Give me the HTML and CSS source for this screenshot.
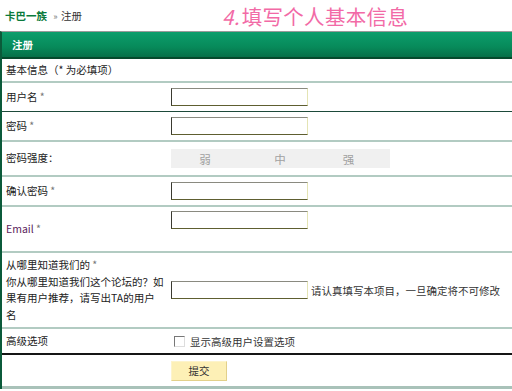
FILE: index.html
```html
<!DOCTYPE html>
<html lang="zh-CN">
<head>
    <meta charset="UTF-8">
    <meta name="viewport" content="width=device-width, initial-scale=1.0">
    <title>注册 - 卡巴一族</title>
    <link rel="stylesheet" href="styles.css">
</head>
<body>

    <div class="top">
        <div class="crumb">
            <a class="site" href="#">卡巴一族</a>
            <span class="sep">&raquo;</span>
            <span>注册</span>
        </div>
        <div class="step"><span class="num">4.</span>填写个人基本信息</div>
    </div>

    <div class="panel">
        <div class="panel-head">注册</div>

        <div class="row row-info light">
            <div class="label">基本信息（* 为必填项）</div>
        </div>

        <div class="row row-field dark-thin">
            <div class="label">用户名 <span class="req">*</span></div>
            <div class="field"><input type="text" class="text-input"></div>
        </div>

        <div class="row row-field light">
            <div class="label">密码 <span class="req">*</span></div>
            <div class="field"><input type="password" class="text-input"></div>
        </div>

        <div class="row row-strength light">
            <div class="label">密码强度：</div>
            <div class="field">
                <div class="strength">
                    <span>弱</span>
                    <span>中</span>
                    <span>强</span>
                </div>
            </div>
        </div>

        <div class="row row-field light">
            <div class="label">确认密码 <span class="req">*</span></div>
            <div class="field"><input type="password" class="text-input"></div>
        </div>

        <div class="row row-email light">
            <div class="label"><span class="email">Email</span> <span class="req">*</span></div>
            <div class="field field-top"><input type="text" class="text-input"></div>
        </div>

        <div class="row row-referrer light">
            <div class="label label-long">从哪里知道我们的 <span class="req">*</span><br>你从哪里知道我们这个论坛的？如果有用户推荐，请写出TA的用户名</div>
            <div class="field">
                <input type="text" class="text-input">
                <span class="hint">请认真填写本项目，一旦确定将不可修改</span>
            </div>
        </div>

        <div class="row row-advanced dark-thick">
            <div class="label">高级选项</div>
            <div class="field">
                <label class="check"><span class="box"></span>显示高级用户设置选项</label>
            </div>
        </div>

        <div class="row row-submit bottom">
            <div class="label"></div>
            <div class="field"><button class="submit-btn">提交</button></div>
        </div>
    </div>

</body>
</html>
```

FILE: styles.css
```css
* {
    box-sizing: border-box;
}

body {
    margin: 0;
    padding: 0;
    overflow: hidden;
    background-color: #fff;
    color: #222;
    font-family: "Noto Sans CJK SC", "DejaVu Sans", sans-serif;
    font-size: 10.5px;
}

.top {
    display: flex;
    align-items: center;
    height: 31px;
    padding-left: 5px;
}

.crumb {
    width: 217px;
    color: #333;
}

.site {
    color: #0a7a3c;
    font-weight: bold;
    text-decoration: none;
}

.sep {
    color: #777;
    font-size: 9px;
    margin: 0 1px 0 4px;
}

.step {
    color: #f26aa6;
    font-size: 20.5px;
    line-height: 24px;
    letter-spacing: 0.3px;
}

.step .num {
    font-style: italic;
    margin-right: 2px;
}

.panel {
    border-top: 1px solid #9a9a9a;
    border-left: 2px solid #0b5a3a;
}

.panel-head {
    height: 27px;
    padding-left: 10px;
    line-height: 25px;
    color: #fff;
    font-weight: bold;
    background: linear-gradient(#0c9e6c, #078a5a 60%, #067048);
    border-bottom: 2px solid #054a2c;
}

.row {
    display: flex;
    align-items: center;
}

.row.light {
    border-bottom: 2px solid #b2cbc2;
}

.row.dark-thin {
    border-bottom: 1px solid #1d4a3a;
}

.row.dark-thick {
    border-bottom: 2px solid #151515;
}

.row.bottom {
    border-bottom: 3px solid #a9c2b9;
}

.label {
    width: 169px;
    flex-shrink: 0;
    padding-left: 4px;
    line-height: 16.5px;
}

.label-long {
    padding-right: 6px;
}

.req {
    color: #777;
}

.email {
    color: #5c235c;
}

.field {
    display: flex;
    align-items: center;
}

.field-top {
    align-self: flex-start;
    padding-top: 4px;
}

.row-info {
    height: 24px;
}

.row-field {
    height: 29px;
}

.row-field.light {
    height: 30px;
}

.row-strength {
    height: 35px;
}

.row-email {
    height: 46px;
}

.row-referrer {
    height: 76px;
}

.row-advanced {
    height: 26px;
}

.row-submit {
    height: 34px;
}

.text-input {
    width: 137px;
    height: 18px;
    margin: 0;
    padding: 0 2px;
    border: 1px solid;
    border-color: #8a8a80 #e4e4b4 #5e5e30 #3a3a30;
    background-color: #fff;
    font-family: inherit;
    font-size: inherit;
}

.hint {
    margin-left: 3px;
    color: #333;
}

.strength {
    display: flex;
    width: 219px;
    height: 19px;
    align-items: center;
    background-color: #f0f0f0;
    color: #a0a0a0;
    font-size: 11.5px;
}

.strength span {
    text-align: center;
}

.strength span:nth-child(1) {
    width: 68px;
}

.strength span:nth-child(2) {
    width: 82px;
}

.strength span:nth-child(3) {
    width: 55px;
}

.check {
    display: flex;
    align-items: center;
    padding-left: 3px;
    color: #333;
}

.box {
    display: inline-block;
    width: 11px;
    height: 11px;
    margin-right: 5px;
    border: 1px solid;
    border-color: #777 #ddd #ddd #777;
    background-color: #fff;
}

.submit-btn {
    width: 56px;
    height: 20px;
    margin: 0;
    padding: 0;
    border: 1px solid;
    border-color: #fdf4cc #e2d08a #e2d08a #fdf4cc;
    background-color: #fdf0b6;
    color: #333;
    font-family: inherit;
    font-size: inherit;
}
```
